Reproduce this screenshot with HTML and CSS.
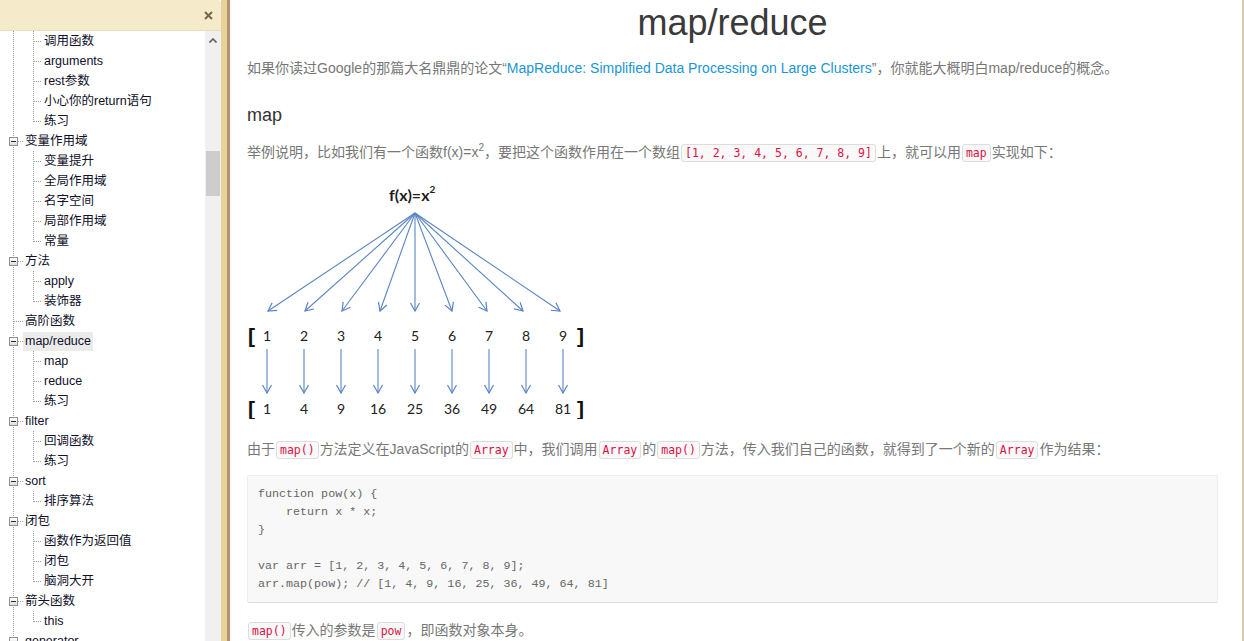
FILE: index.html
```html
<!DOCTYPE html>
<html lang="zh-CN">
<head>
    <meta charset="UTF-8">
    <title>map/reduce</title>
    <link rel="stylesheet" href="styles.css">
</head>
<body>
    <!-- Sidebar: table of contents -->
    <aside class="sidebar">
        <div class="sidebar-head">
            <svg class="close" width="9" height="9" viewBox="0 0 9 9"><path d="M1 1 L8 8 M8 1 L1 8" stroke="#7b6648" stroke-width="2"/></svg>
        </div>
        <div class="sidebar-body">
            <div class="tree">
                <ul class="branch">
                    <li><span class="dash"></span><span class="label">调用函数</span></li>
                    <li><span class="dash"></span><span class="label">arguments</span></li>
                    <li><span class="dash"></span><span class="label">rest参数</span></li>
                    <li><span class="dash"></span><span class="label">小心你的return语句</span></li>
                    <li><span class="dash"></span><span class="label">练习</span></li>
                </ul>
                <div class="node"><span class="toggle"></span><span class="dash"></span><span class="label">变量作用域</span></div>
                <ul class="branch">
                    <li><span class="dash"></span><span class="label">变量提升</span></li>
                    <li><span class="dash"></span><span class="label">全局作用域</span></li>
                    <li><span class="dash"></span><span class="label">名字空间</span></li>
                    <li><span class="dash"></span><span class="label">局部作用域</span></li>
                    <li><span class="dash"></span><span class="label">常量</span></li>
                </ul>
                <div class="node"><span class="toggle"></span><span class="dash"></span><span class="label">方法</span></div>
                <ul class="branch">
                    <li><span class="dash"></span><span class="label">apply</span></li>
                    <li><span class="dash"></span><span class="label">装饰器</span></li>
                </ul>
                <div class="node leaf"><span class="dash"></span><span class="label">高阶函数</span></div>
                <div class="node"><span class="toggle"></span><span class="dash"></span><span class="label selected">map/reduce</span></div>
                <ul class="branch">
                    <li><span class="dash"></span><span class="label">map</span></li>
                    <li><span class="dash"></span><span class="label">reduce</span></li>
                    <li><span class="dash"></span><span class="label">练习</span></li>
                </ul>
                <div class="node"><span class="toggle"></span><span class="dash"></span><span class="label">filter</span></div>
                <ul class="branch">
                    <li><span class="dash"></span><span class="label">回调函数</span></li>
                    <li><span class="dash"></span><span class="label">练习</span></li>
                </ul>
                <div class="node"><span class="toggle"></span><span class="dash"></span><span class="label">sort</span></div>
                <ul class="branch">
                    <li><span class="dash"></span><span class="label">排序算法</span></li>
                </ul>
                <div class="node"><span class="toggle"></span><span class="dash"></span><span class="label">闭包</span></div>
                <ul class="branch">
                    <li><span class="dash"></span><span class="label">函数作为返回值</span></li>
                    <li><span class="dash"></span><span class="label">闭包</span></li>
                    <li><span class="dash"></span><span class="label">脑洞大开</span></li>
                </ul>
                <div class="node"><span class="toggle"></span><span class="dash"></span><span class="label">箭头函数</span></div>
                <ul class="branch">
                    <li><span class="dash"></span><span class="label">this</span></li>
                </ul>
                <div class="node"><span class="toggle"></span><span class="dash"></span><span class="label">generator</span></div>
            </div>
            <div class="scrollbar">
                <div class="sb-up">
                    <svg width="8" height="5" viewBox="0 0 8 5"><path d="M0.5 4.5 L4 1 L7.5 4.5" fill="none" stroke="#606060" stroke-width="1.6"/></svg>
                </div>
                <div class="sb-thumb"></div>
            </div>
        </div>
    </aside>

    <div class="splitter"></div>

    <!-- Article -->
    <main class="content">
        <h1>map/reduce</h1>
        <p class="intro">如果你读过Google的那篇大名鼎鼎的论文“<a href="#">MapReduce: Simplified Data Processing on Large Clusters</a>”，你就能大概明白map/reduce的概念。</p>

        <h3>map</h3>
        <p>举例说明，比如我们有一个函数f(x)=x<sup>2</sup>，要把这个函数作用在一个数组<code>[1, 2, 3, 4, 5, 6, 7, 8, 9]</code>上，就可以用<code>map</code>实现如下：</p>

        <div class="figure">
            <svg width="340" height="240" viewBox="0 0 340 240">
                <defs>
                    <marker id="head" markerUnits="userSpaceOnUse" markerWidth="12" markerHeight="12" refX="10" refY="6" orient="auto">
                        <path d="M2 1.5 L10 6 L2 10.5" fill="none" stroke="#5a85c4" stroke-width="1.2"/>
                    </marker>
                </defs>
                <text class="fx" x="142" y="22">f(x)=x<tspan dy="-8" font-size="10">2</tspan></text>
                <g stroke="#5a85c4" stroke-width="1.1" marker-end="url(#head)">
                    <line x1="168" y1="34" x2="21" y2="132"/>
                    <line x1="168" y1="34" x2="58" y2="132"/>
                    <line x1="168" y1="34" x2="95" y2="132"/>
                    <line x1="168" y1="34" x2="133" y2="132"/>
                    <line x1="168" y1="34" x2="168" y2="132"/>
                    <line x1="168" y1="34" x2="205" y2="132"/>
                    <line x1="168" y1="34" x2="240" y2="132"/>
                    <line x1="168" y1="34" x2="276" y2="132"/>
                    <line x1="168" y1="34" x2="313" y2="132"/>

                    <line x1="20" y1="170" x2="20" y2="214"/>
                    <line x1="57" y1="170" x2="57" y2="214"/>
                    <line x1="94" y1="170" x2="94" y2="214"/>
                    <line x1="131" y1="170" x2="131" y2="214"/>
                    <line x1="168" y1="170" x2="168" y2="214"/>
                    <line x1="205" y1="170" x2="205" y2="214"/>
                    <line x1="242" y1="170" x2="242" y2="214"/>
                    <line x1="279" y1="170" x2="279" y2="214"/>
                    <line x1="316" y1="170" x2="316" y2="214"/>
                </g>
                <g class="nums" text-anchor="middle">
                    <text x="20" y="162">1</text>
                    <text x="57" y="162">2</text>
                    <text x="94" y="162">3</text>
                    <text x="131" y="162">4</text>
                    <text x="168" y="162">5</text>
                    <text x="205" y="162">6</text>
                    <text x="242" y="162">7</text>
                    <text x="279" y="162">8</text>
                    <text x="316" y="162">9</text>

                    <text x="20" y="235">1</text>
                    <text x="57" y="235">4</text>
                    <text x="94" y="235">9</text>
                    <text x="131" y="235">16</text>
                    <text x="168" y="235">25</text>
                    <text x="205" y="235">36</text>
                    <text x="242" y="235">49</text>
                    <text x="279" y="235">64</text>
                    <text x="316" y="235">81</text>
                </g>
                <g class="brackets">
                    <text x="1" y="164">[</text>
                    <text x="337" y="164" text-anchor="end">]</text>
                    <text x="1" y="237">[</text>
                    <text x="337" y="237" text-anchor="end">]</text>
                </g>
            </svg>
        </div>

        <p class="after-fig">由于<code>map()</code>方法定义在JavaScript的<code>Array</code>中，我们调用<code>Array</code>的<code>map()</code>方法，传入我们自己的函数，就得到了一个新的<code>Array</code>作为结果：</p>

        <pre>function pow(x) {
    return x * x;
}

var arr = [1, 2, 3, 4, 5, 6, 7, 8, 9];
arr.map(pow); // [1, 4, 9, 16, 25, 36, 49, 64, 81]</pre>

        <p class="after-code"><code>map()</code>传入的参数是<code>pow</code>，即函数对象本身。</p>
    </main>
</body>
</html>
```

FILE: styles.css
```css
/* Page frame */
body {
    margin: 0;
    height: 100vh;
    display: flex;
    overflow: hidden;
    background: #fff;
    font-family: "Liberation Sans", "Noto Sans CJK SC", sans-serif;
}

/* Sidebar */
.sidebar {
    width: 221px;
    flex: none;
    display: flex;
    flex-direction: column;
}

.sidebar-head {
    height: 31px;
    flex: none;
    box-sizing: border-box;
    background: #f5ebcb;
    border-bottom: 1px solid #ebdeb6;
    border-radius: 0 4px 0 0;
    display: flex;
    justify-content: flex-end;
    align-items: center;
    padding-right: 8px;
}

.sidebar-body {
    flex: 1;
    display: flex;
    min-height: 0;
}

/* Tree view */
.tree {
    flex: 1;
    overflow: hidden;
    font-size: 12.5px;
    color: #10102a;
    /* level 1 connector */
    background: repeating-linear-gradient(to bottom, #9a9a9a 0 1px, transparent 1px 2px) 13px 0 / 1px 100% no-repeat;
}

.tree ul {
    list-style: none;
    margin: 0 0 0 33px;
    padding: 0;
}

.branch li,
.node {
    height: 20px;
    display: flex;
    align-items: center;
    white-space: nowrap;
}

.branch li {
    background: repeating-linear-gradient(to bottom, #9a9a9a 0 1px, transparent 1px 2px) 0 0 / 1px 100% no-repeat;
}

.branch li:last-child {
    background-size: 1px 11px;
}

.dash {
    height: 1px;
    flex: none;
    background: repeating-linear-gradient(to right, #9a9a9a 0 1px, transparent 1px 2px);
}

.branch .dash {
    width: 8px;
    margin-left: 1px;
}

.node {
    padding-left: 9px;
}

.node .dash {
    width: 5px;
}

.node.leaf {
    padding-left: 14px;
}

.node.leaf .dash {
    width: 9px;
}

.toggle {
    width: 9px;
    height: 9px;
    flex: none;
    box-sizing: border-box;
    border: 1px solid #8f9092;
    background:
        linear-gradient(#1d2a4a, #1d2a4a) center / 5px 1px no-repeat,
        linear-gradient(#ffffff, #dedede);
}

.label {
    padding: 0 2px;
    line-height: 19px;
}

.label.selected {
    background: #ebebeb;
}

/* Fake scrollbar */
.scrollbar {
    width: 16px;
    flex: none;
    background: #f0f0f0;
    display: flex;
    flex-direction: column;
    align-items: center;
}

.sb-up {
    height: 18px;
    display: flex;
    align-items: center;
    justify-content: center;
}

.sb-thumb {
    width: 14px;
    height: 45px;
    margin-top: 102px;
    background: #cdcdcd;
}

.splitter {
    width: 9px;
    flex: none;
    background: linear-gradient(to right, #e8d29c 0 6px, #b2936c 6px);
}

/* Article */
.content {
    flex: 1;
    min-width: 0;
    padding: 0 24px 0 17px;
    border-right: 2px solid #dbcaa7;
    overflow: hidden;
    font-size: 14px;
    line-height: 22px;
    color: #777;
}

.content h1 {
    margin: 0;
    padding-top: 3px;
    font-size: 36px;
    line-height: 40px;
    font-weight: normal;
    text-align: center;
    color: #3a3a3a;
}

.content p {
    margin: 14px 0 0;
    white-space: nowrap;
}

.content a {
    color: #1a96d4;
    text-decoration: none;
}

.content h3 {
    margin: 24px 0 0;
    font-size: 18px;
    line-height: 24px;
    font-weight: normal;
    color: #333;
}

sup {
    font-size: 10px;
    line-height: 0;
}

code {
    font-family: "DejaVu Sans Mono", monospace;
    font-size: 11.5px;
    color: #dd1144;
    background: #f9f9f9;
    border: 1px solid #dddddd;
    border-radius: 3px;
    padding: 1px 3px;
    margin: 0 1px;
}

.figure {
    margin-top: 15px;
    height: 240px;
}

.figure svg {
    display: block;
}

.fx {
    font-family: Lato, sans-serif;
    font-weight: bold;
    font-size: 16px;
    fill: #1c1c1c;
}

.nums text {
    font-family: Lato, sans-serif;
    font-size: 14px;
    fill: #222;
}

.brackets text {
    font-family: "Liberation Sans", sans-serif;
    font-weight: bold;
    font-size: 21px;
    fill: #111;
}

.content p.after-fig {
    margin-top: 19px;
}

pre {
    margin: 14px 0 0;
    padding: 9px 10px;
    background: #f8f8f8;
    border: 1px solid #ededed;
    border-bottom-color: #dcdcdc;
    border-radius: 2px;
    font-family: "Liberation Mono", monospace;
    font-size: 11.7px;
    line-height: 18px;
    color: #666;
}

.content p.after-code {
    margin-top: 16px;
}
```
